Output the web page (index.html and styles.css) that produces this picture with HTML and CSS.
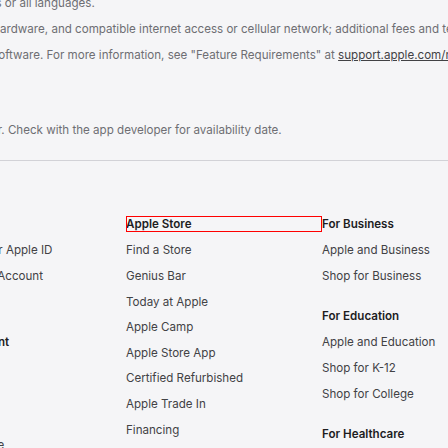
FILE: index.html
```html
<!DOCTYPE html>
<html lang="en">
<head>
<meta charset="utf-8">
<title>Apple Footer</title>
<link rel="stylesheet" href="styles.css">
</head>
<body>
<footer class="footer">
  <div class="content">
    <section class="footnotes">
      <p class="fn">Some features may not be available in all regions or all languages.</p>
      <p class="fn">Requires the new macOS software, compatible hardware, and compatible internet access or cellular network; additional fees and terms apply.</p>
      <p class="fn">Some features require the latest iOS or macOS software. For more information, see "Feature Requirements" at <a class="fn-link" href="#">support.apple.com/macos/feature-requirements</a>.</p>
      <p class="fn fn-last">Third-party apps for this feature are coming later. Check with the app developer for availability date.</p>
    </section>
    <hr class="rule">
    <nav class="directory">
      <div class="col">
        <div class="section">
          <h3 class="title">Shop and Learn</h3>
          <ul class="list">
            <li class="item">Store</li>
            <li class="item">Mac</li>
            <li class="item">iPad</li>
            <li class="item">iPhone</li>
            <li class="item">Watch</li>
            <li class="item">Vision</li>
            <li class="item">AirPods</li>
            <li class="item">TV &amp; Home</li>
            <li class="item">AirTag</li>
          </ul>
        </div>
      </div>
      <div class="col">
        <div class="section">
          <h3 class="title">Account</h3>
          <ul class="list">
            <li class="item">Manage Your Apple ID</li>
            <li class="item">Apple Store Account</li>
            <li class="item">iCloud.com</li>
          </ul>
        </div>
        <div class="section">
          <h3 class="title">Entertainment</h3>
          <ul class="list">
            <li class="item">Apple One</li>
            <li class="item">Apple TV+</li>
            <li class="item">Apple Music</li>
            <li class="item">Apple Arcade</li>
            <li class="item">Apple Podcasts</li>
          </ul>
        </div>
      </div>
      <div class="col">
        <div class="section">
          <h3 class="title title-outlined">Apple Store</h3>
          <ul class="list">
            <li class="item">Find a Store</li>
            <li class="item">Genius Bar</li>
            <li class="item">Today at Apple</li>
            <li class="item">Apple Camp</li>
            <li class="item">Apple Store App</li>
            <li class="item">Certified Refurbished</li>
            <li class="item">Apple Trade In</li>
            <li class="item">Financing</li>
            <li class="item">Order Status</li>
          </ul>
        </div>
      </div>
      <div class="col">
        <div class="section">
          <h3 class="title">For Business</h3>
          <ul class="list">
            <li class="item">Apple and Business</li>
            <li class="item">Shop for Business</li>
          </ul>
        </div>
        <div class="section">
          <h3 class="title">For Education</h3>
          <ul class="list">
            <li class="item">Apple and Education</li>
            <li class="item">Shop for K-12</li>
            <li class="item">Shop for College</li>
          </ul>
        </div>
        <div class="section">
          <h3 class="title">For Healthcare</h3>
          <ul class="list">
            <li class="item">Apple in Healthcare</li>
          </ul>
        </div>
      </div>
      <div class="col">
        <div class="section">
          <h3 class="title">Apple Values</h3>
          <ul class="list">
            <li class="item">Accessibility</li>
            <li class="item">Education</li>
          </ul>
        </div>
      </div>
    </nav>
  </div>
</footer>
</body>
</html>
```
FILE: styles.css
```css
html, body {
  margin: 0;
  padding: 0;
}
body {
  background: #f5f5f7;
  font-family: Inter, "Liberation Sans", Arial, sans-serif;
  font-size: 11.6px;
  line-height: 16px;
  color: #6e6e73;
  overflow: hidden;
  width: 448px;
  height: 448px;
}
.footer {
  display: flex;
  justify-content: center;
}
.content {
  flex: none;
  width: 980px;
}
.footnotes {
  margin-top: -5px;
}
.fn {
  margin: 0 0 10px;
  white-space: nowrap;
}
.fn-last {
  margin-top: 59px;
  margin-bottom: 0;
}
.fn-link {
  color: #424245;
  text-decoration: underline;
}
.rule {
  margin: 22px 0 0;
  border: 0;
  border-top: 1px solid #d2d2d7;
  height: 0;
}
.directory {
  display: grid;
  grid-template-columns: repeat(5, 196px);
  padding-top: 55px;
}
.col {
  min-width: 0;
}
.section {
  margin-bottom: 24px;
}
.title {
  margin: 0 0 10.4px;
  font-size: 11.6px;
  line-height: 16px;
  font-weight: 600;
  color: #1d1d1f;
  white-space: nowrap;
}
.title-outlined {
  outline: 1px solid #ff0000;
  outline-offset: -1px;
}
.list {
  list-style: none;
  margin: 0;
  padding: 0;
}
.item {
  margin: 0 0 9.6px;
  color: #424245;
  white-space: nowrap;
}
.item:last-child {
  margin-bottom: 0;
}
```
